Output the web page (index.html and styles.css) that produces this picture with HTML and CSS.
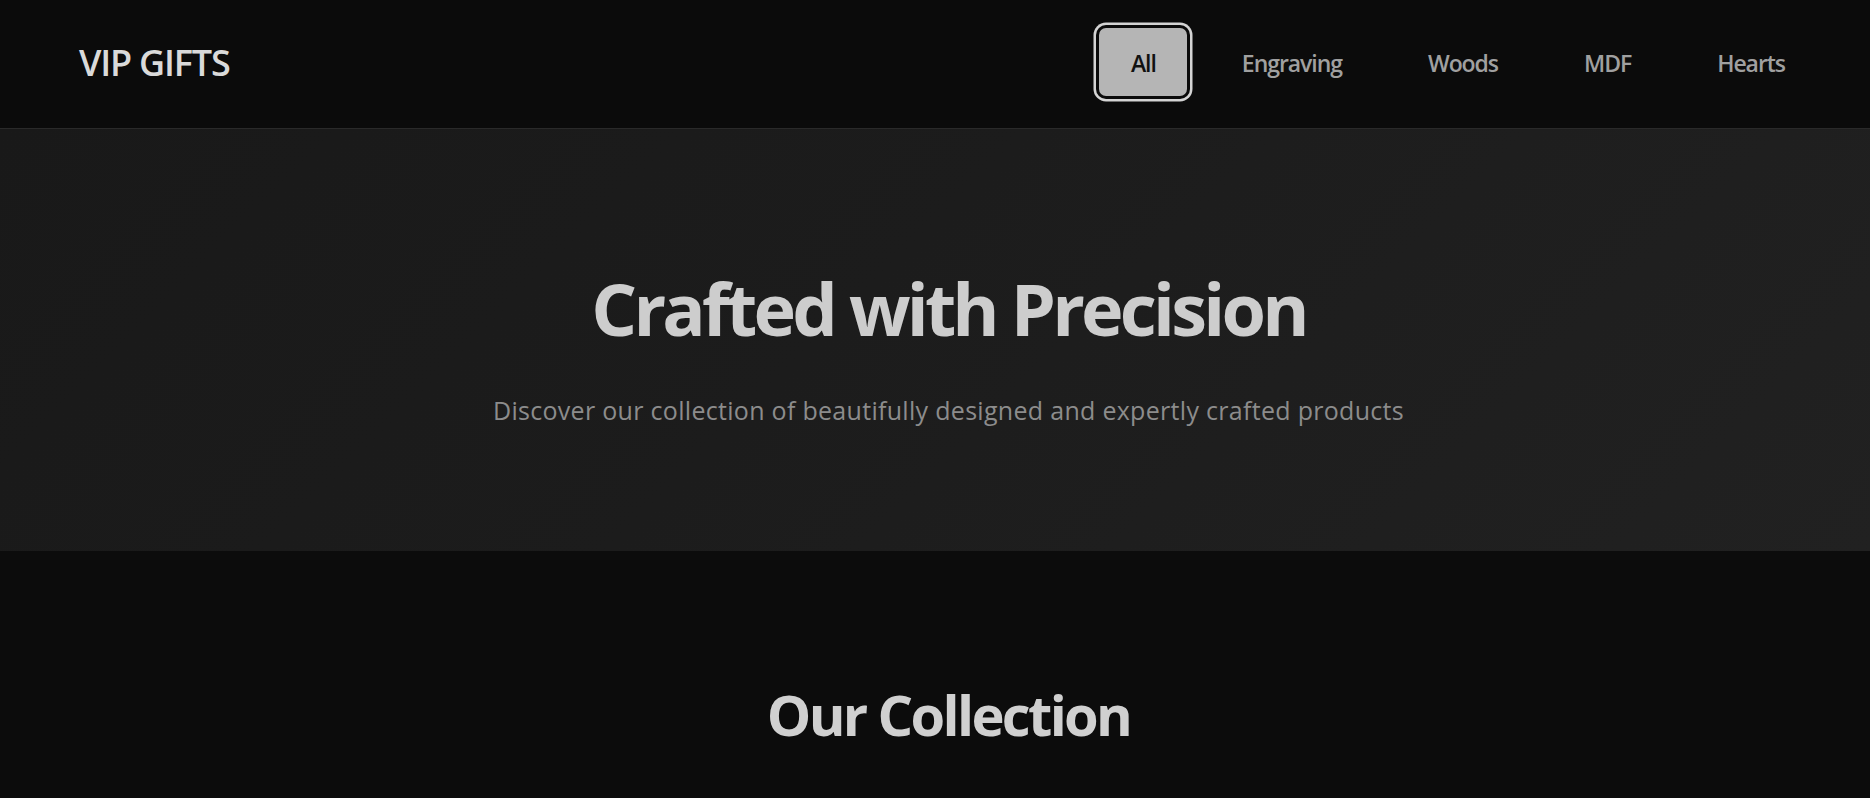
FILE: index.html
```html
<!DOCTYPE html>
<html lang="en">
<head>
<meta charset="utf-8">
<title>VIP GIFTS</title>
<link rel="stylesheet" href="styles.css">
</head>
<body>
<header class="site-header">
  <div class="logo">VIP GIFTS</div>
  <nav class="filters">
    <button class="filter is-active">All</button>
    <button class="filter">Engraving</button>
    <button class="filter">Woods</button>
    <button class="filter">MDF</button>
    <button class="filter">Hearts</button>
  </nav>
</header>
<section class="hero">
  <h1 class="hero-title">Crafted with Precision</h1>
  <p class="hero-sub">Discover our collection of beautifully designed and expertly crafted products</p>
</section>
<section class="collection">
  <h2 class="collection-title">Our Collection</h2>
</section>
</body>
</html>
```
FILE: styles.css
```css
* { box-sizing: border-box; }
html, body { margin: 0; padding: 0; }
body {
  background: #0c0c0c;
  font-family: "Open Sans", "Noto Sans", sans-serif;
  color: #cfcfcf;
}
.site-header {
  height: 129px;
  background: #0b0b0b;
  border-bottom: 1px solid #2a2a2a;
  display: flex;
  align-items: center;
  justify-content: space-between;
  padding: 0 54px 0 79px;
}
.logo {
  font-size: 36px;
  font-weight: 600;
  letter-spacing: -1.2px;
  color: #dadada;
  line-height: 49px;
  margin-bottom: 3px;
}
.filters {
  display: flex;
  gap: 24px;
  align-items: center;
  margin-bottom: 5px;
}
.filter {
  font-family: inherit;
  font-size: 23px;
  font-weight: 600;
  letter-spacing: -1.05px;
  line-height: 31px;
  color: #a0a0a0;
  background: transparent;
  border: 0;
  border-radius: 7px;
  padding: 20px 31px 17px;
  cursor: pointer;
}
.filter.is-active {
  background: #b5b5b5;
  color: #111;
  padding-left: 32px;
  padding-right: 31px;
  box-shadow: 0 0 0 3px #0b0b0b, 0 0 0 5.5px #d4d4d4;
}
.hero {
  height: 422px;
  background: linear-gradient(135deg, #191919 0%, #1c1c1c 45%, #212121 100%);
  padding: 136px 0 0 27px;
  text-align: center;
}
.hero-title {
  margin: 0;
  font-size: 72px;
  font-weight: 700;
  letter-spacing: -3.8px;
  line-height: 1.2;
  color: #cdcdcd;
}
.hero-sub {
  margin: 41px 0 0;
  font-size: 25px;
  font-weight: 400;
  letter-spacing: 0.3px;
  line-height: 1.5;
  color: #8c8c8c;
}
.collection {
  background: #0c0c0c;
  padding: 130px 0 120px 27px;
  text-align: center;
}
.collection-title {
  margin: 0;
  font-size: 56px;
  font-weight: 700;
  letter-spacing: -2.65px;
  line-height: 1.2;
  color: #d0d0d0;
}
```
